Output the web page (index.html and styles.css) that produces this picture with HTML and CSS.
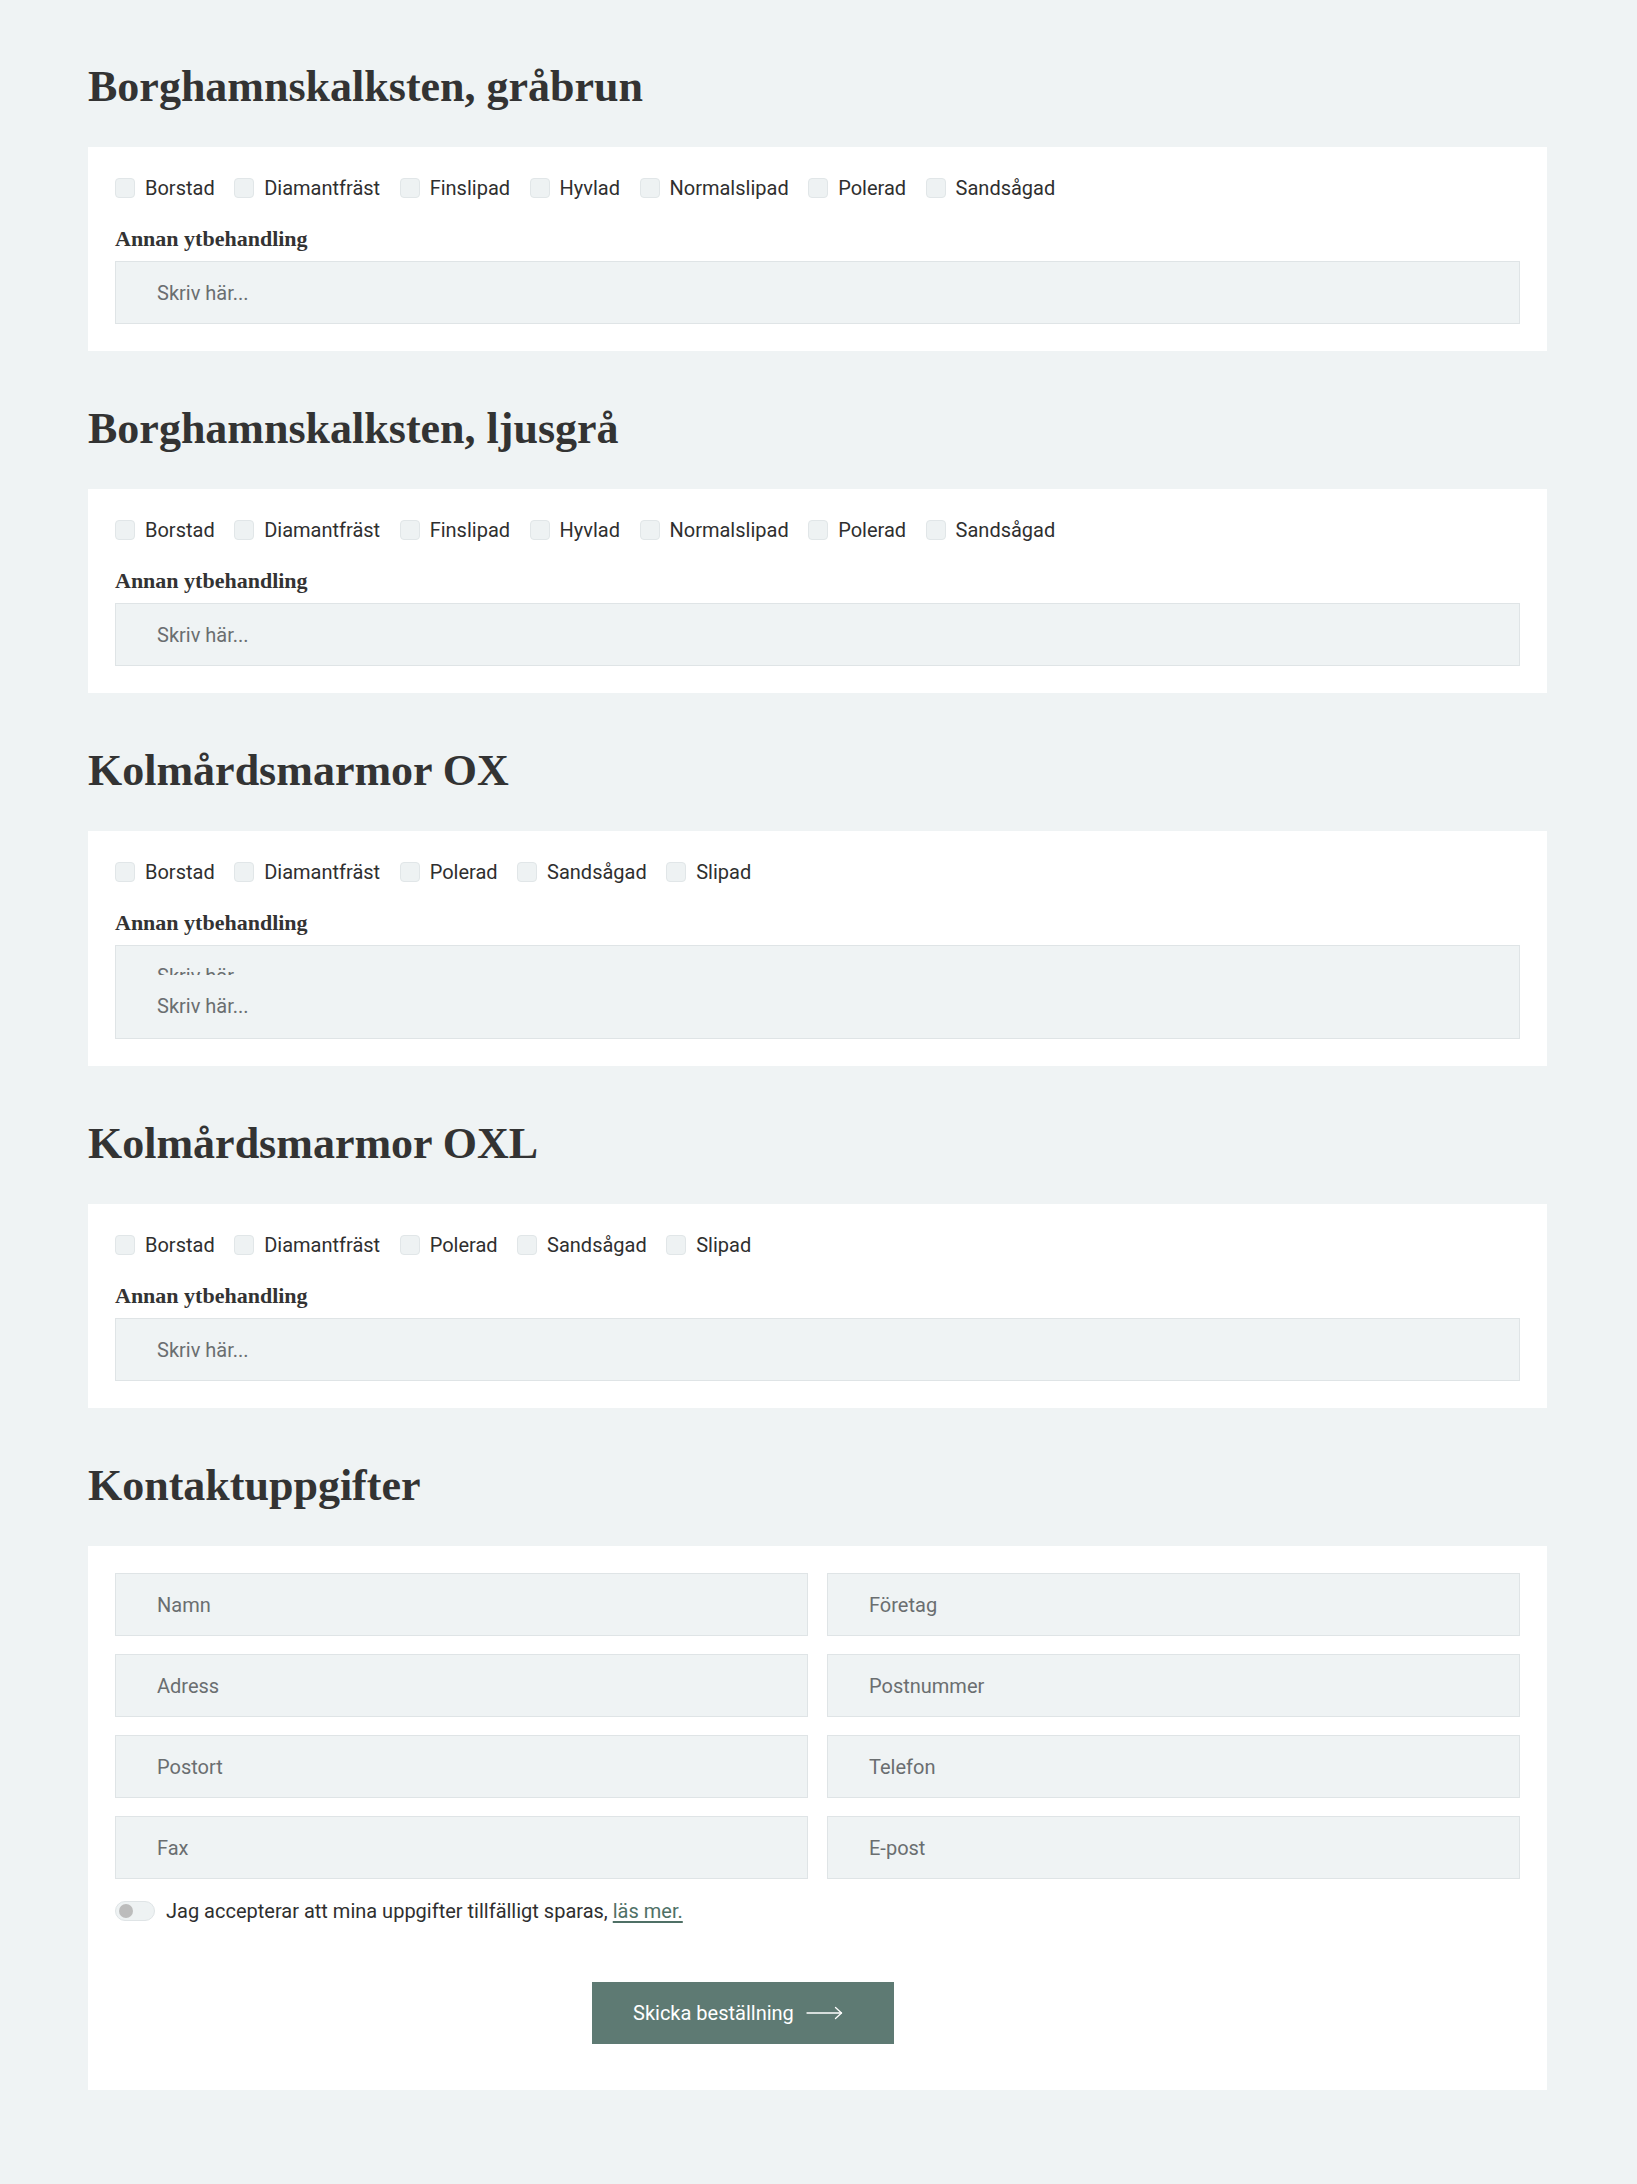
FILE: index.html
```html
<!DOCTYPE html>
<html lang="sv">
<head>
<meta charset="utf-8">
<title>Beställning</title>
<link rel="stylesheet" href="styles.css">
</head>
<body>
<main class="page">

  <section class="section">
    <h2 class="section-title">Borghamnskalksten, gråbrun</h2>
    <div class="card">
      <div class="checks">
        <label class="check"><span class="box"></span>Borstad</label>
        <label class="check"><span class="box"></span>Diamantfräst</label>
        <label class="check"><span class="box"></span>Finslipad</label>
        <label class="check"><span class="box"></span>Hyvlad</label>
        <label class="check"><span class="box"></span>Normalslipad</label>
        <label class="check"><span class="box"></span>Polerad</label>
        <label class="check"><span class="box"></span>Sandsågad</label>
      </div>
      <div class="field-label">Annan ytbehandling</div>
      <div class="input">Skriv här...</div>
    </div>
  </section>

  <section class="section">
    <h2 class="section-title">Borghamnskalksten, ljusgrå</h2>
    <div class="card">
      <div class="checks">
        <label class="check"><span class="box"></span>Borstad</label>
        <label class="check"><span class="box"></span>Diamantfräst</label>
        <label class="check"><span class="box"></span>Finslipad</label>
        <label class="check"><span class="box"></span>Hyvlad</label>
        <label class="check"><span class="box"></span>Normalslipad</label>
        <label class="check"><span class="box"></span>Polerad</label>
        <label class="check"><span class="box"></span>Sandsågad</label>
      </div>
      <div class="field-label">Annan ytbehandling</div>
      <div class="input">Skriv här...</div>
    </div>
  </section>

  <section class="section">
    <h2 class="section-title">Kolmårdsmarmor OX</h2>
    <div class="card">
      <div class="checks">
        <label class="check"><span class="box"></span>Borstad</label>
        <label class="check"><span class="box"></span>Diamantfräst</label>
        <label class="check"><span class="box"></span>Polerad</label>
        <label class="check"><span class="box"></span>Sandsågad</label>
        <label class="check"><span class="box"></span>Slipad</label>
      </div>
      <div class="field-label">Annan ytbehandling</div>
      <div class="textarea">
        <div class="clipped"><span>Skriv här...</span></div>
        <div class="textarea-line">Skriv här...</div>
      </div>
    </div>
  </section>

  <section class="section">
    <h2 class="section-title">Kolmårdsmarmor OXL</h2>
    <div class="card">
      <div class="checks">
        <label class="check"><span class="box"></span>Borstad</label>
        <label class="check"><span class="box"></span>Diamantfräst</label>
        <label class="check"><span class="box"></span>Polerad</label>
        <label class="check"><span class="box"></span>Sandsågad</label>
        <label class="check"><span class="box"></span>Slipad</label>
      </div>
      <div class="field-label">Annan ytbehandling</div>
      <div class="input">Skriv här...</div>
    </div>
  </section>

  <section class="section">
    <h2 class="section-title">Kontaktuppgifter</h2>
    <div class="card card-contact">
      <div class="contact-grid">
        <div class="input">Namn</div>
        <div class="input">Företag</div>
        <div class="input">Adress</div>
        <div class="input">Postnummer</div>
        <div class="input">Postort</div>
        <div class="input">Telefon</div>
        <div class="input">Fax</div>
        <div class="input">E-post</div>
      </div>
      <div class="consent">
        <span class="toggle"><span class="knob"></span></span>
        <span>Jag accepterar att mina uppgifter tillfälligt sparas, <a class="more" href="#">läs mer.</a></span>
      </div>
      <div class="actions">
        <button class="submit" type="button">Skicka beställning
          <svg class="arrow" width="37" height="14" viewBox="0 0 37 14" fill="none" stroke="#ffffff" stroke-width="1.3" stroke-linecap="round" stroke-linejoin="round"><path d="M1 7H35.5"/><path d="M29.5 1.5L35.5 7L29.5 12.5"/></svg>
        </button>
      </div>
    </div>
  </section>

</main>
</body>
</html>
```

FILE: styles.css
```css
* {
  box-sizing: border-box;
}

html,
body {
  margin: 0;
  padding: 0;
  background: #eff3f4;
}

body {
  font-family: Roboto, "Liberation Sans", Arial, sans-serif;
  color: #333333;
  min-height: 2184px;
}

.page {
  width: 1459px;
  margin-left: 88px;
  padding-top: 61px;
  padding-bottom: 94px;
}

.section + .section {
  margin-top: 52px;
}

.section-title {
  margin: 0 0 34px;
  font-family: "Liberation Serif", "Times New Roman", serif;
  font-weight: 700;
  font-size: 44px;
  line-height: 52px;
  color: #333333;
  letter-spacing: 0;
}

.card {
  background: #ffffff;
  padding: 27px;
}

.checks {
  display: flex;
  flex-wrap: wrap;
  column-gap: 19.5px;
  height: 28px;
  align-items: center;
}

.check {
  display: flex;
  align-items: center;
  gap: 10px;
  font-size: 20px;
  line-height: 28px;
  color: #2f2f2f;
}

.box {
  display: block;
  width: 20px;
  height: 20px;
  border-radius: 4px;
  background: #eef2f3;
  border: 1px solid #e1e6e8;
}

.field-label {
  margin-top: 22px;
  margin-bottom: 7px;
  font-family: "Liberation Serif", "Times New Roman", serif;
  font-weight: 700;
  font-size: 22px;
  line-height: 30px;
  color: #333333;
}

.input {
  height: 63px;
  display: flex;
  align-items: center;
  padding: 0 41px;
  background: #eff3f4;
  border: 1px solid #dfe4e6;
  font-size: 20px;
  color: #6a6e70;
}

.textarea {
  height: 94px;
  padding: 20px 41px 0;
  background: #eff3f4;
  border: 1px solid #dfe4e6;
  font-size: 20px;
  color: #6a6e70;
}

.clipped {
  height: 9px;
  overflow: hidden;
  line-height: 20px;
}

.clipped span {
  display: block;
  line-height: 20px;
}

.textarea-line {
  margin-top: 21px;
  line-height: 20px;
}

.contact-grid {
  display: grid;
  grid-template-columns: 1fr 1fr;
  column-gap: 19px;
  row-gap: 18px;
}

.consent {
  margin-top: 22px;
  display: flex;
  align-items: center;
  gap: 11px;
  font-size: 20px;
  line-height: 20px;
  color: #2f2f2f;
}

.toggle {
  position: relative;
  display: block;
  width: 40px;
  height: 20px;
  border-radius: 10px;
  background: #eef2f3;
  border: 1px solid #dfe4e6;
}

.knob {
  position: absolute;
  left: 3px;
  top: 2px;
  width: 14px;
  height: 14px;
  border-radius: 50%;
  background: #bcbcbc;
}

.more {
  color: #4f7066;
  text-decoration: underline;
  text-underline-offset: 3px;
}

.actions {
  margin-top: 61px;
  padding-left: 477px;
  padding-bottom: 19px;
}

.submit {
  display: inline-flex;
  align-items: center;
  height: 62px;
  padding: 0 51px 0 41px;
  background: #5e7a73;
  border: none;
  border-radius: 0;
  color: #ffffff;
  font-family: Roboto, "Liberation Sans", Arial, sans-serif;
  font-size: 20px;
  cursor: pointer;
}

.arrow {
  margin-left: 12px;
  display: block;
}
```
